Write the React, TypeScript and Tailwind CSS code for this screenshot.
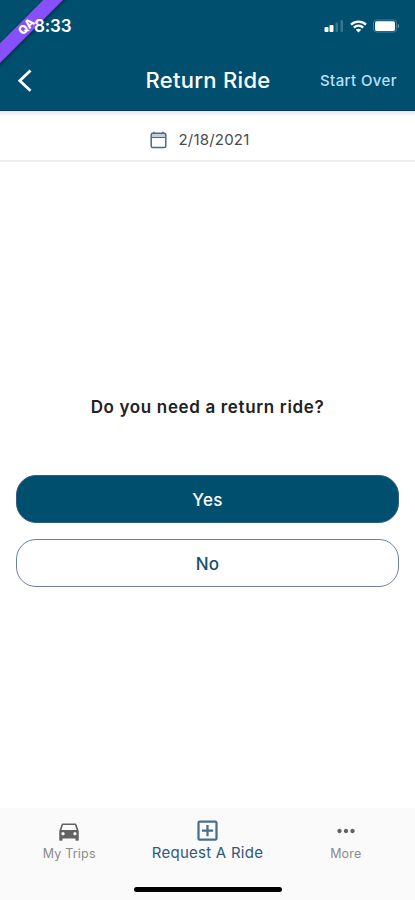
import { MdDirectionsCar, MdMoreHoriz, MdOutlineAddBox } from "react-icons/md";

function EnvironmentRibbon() {
  return (
    <div className="absolute -left-[24px] top-[19.5px] z-10 flex h-[13.5px] w-[100px] -rotate-45 items-center justify-center bg-[#8750fa] pl-px pt-px text-[12px] font-extrabold leading-none text-white shadow-[0_1px_4px_rgba(0,0,0,0.5)]">
      QA
    </div>
  );
}

function StatusBar() {
  return (
    <div className="flex h-[52px] items-center justify-between pl-[34px] pr-[15px]">
      <span className="relative top-px z-20 text-[17px] font-semibold tracking-[-0.15px]">8:33</span>
      <div className="flex items-center gap-[6px]">
        <svg width="20" height="14" viewBox="0 0 20 14" fill="currentColor">
          <rect x="0.5" y="8" width="4" height="5" rx="1" />
          <rect x="5.5" y="6" width="4" height="7" rx="1" />
          <rect x="11.5" y="3.5" width="2.5" height="9.5" rx="1" opacity="0.22" />
          <rect x="16.5" y="1" width="2.5" height="12" rx="1" opacity="0.22" />
        </svg>
        <svg width="17" height="13" viewBox="0 0 17 13" fill="none" stroke="currentColor" strokeWidth="2.3">
          <path d="M1 4.6c4.3-4 10.7-4 15 0" />
          <path d="M3.8 7.6c2.7-2.5 6.7-2.5 9.4 0" />
          <path d="M8.5 12.5 5.8 9.8c1.5-1.4 3.9-1.4 5.4 0z" fill="currentColor" stroke="none" />
        </svg>
        <svg width="27" height="14" viewBox="0 0 27 14">
          <rect x="0.5" y="1" width="23" height="12" rx="3" fill="none" stroke="currentColor" opacity="0.25" />
          <rect x="2" y="2.3" width="20" height="9.8" rx="1.8" fill="currentColor" />
          <path d="M24.8 4.8c1.6.7 1.6 3.7 0 4.4z" fill="currentColor" opacity="0.5" />
        </svg>
      </div>
    </div>
  );
}

function Header() {
  return (
    <header className="relative h-[111px] overflow-hidden border-b border-[#003a5c] bg-[#004f6f] text-white">
      <EnvironmentRibbon />
      <StatusBar />
      <div className="grid h-[57px] grid-cols-[1fr_auto_1fr] items-center pl-[18px] pr-[18px]">
        <button aria-label="Back">
          <svg width="16" height="24" viewBox="0 0 16 24" fill="none" stroke="currentColor" strokeWidth="2.8">
            <path d="M12.5 1.5 1.8 11.8l10.7 10" />
          </svg>
        </button>
        <h1 className="pl-px text-[22px] font-medium tracking-[0.3px]">Return Ride</h1>
        <button className="justify-self-end pt-px text-[15px] font-medium tracking-[0.4px] text-[#bce0fa]">
          Start Over
        </button>
      </div>
    </header>
  );
}

function DateBar() {
  return (
    <div className="flex h-[51px] items-center justify-center gap-3 border-b-2 border-[#eeeeee] bg-[linear-gradient(#e9e7f0,#ffffff_6px)] pr-4 pt-2 text-[#4b4b4b]">
      <svg width="17" height="18" viewBox="0 0 17 18" fill="none" stroke="#456b8d" strokeWidth="1.5">
        <path d="M1.5 2.5h14v4h-14z" fill="#c3cfdd" stroke="none" />
        <rect x="1.2" y="2.2" width="14.6" height="14.3" rx="1.5" />
        <path d="M1.5 6.5h14" strokeWidth="1" />
        <path d="M4 .8v2M13 .8v2" />
      </svg>
      <span className="pt-px text-[15px] tracking-[0.2px]">2/18/2021</span>
    </div>
  );
}

const tabs = [
  { label: "My Trips", icon: <MdDirectionsCar size={26} />, active: false },
  { label: "Request A Ride", icon: <MdOutlineAddBox size={27} />, active: true },
  { label: "More", icon: <MdMoreHoriz size={26} />, active: false },
];

function TabBar() {
  return (
    <nav className="flex h-[92px] flex-col items-center bg-[#fafafa]">
      <div className="grid w-full grid-cols-3 pt-[9px]">
        {tabs.map((tab) => (
          <button
            key={tab.label}
            className={
              tab.active
                ? "flex flex-col items-center text-[15px] leading-5 tracking-[0.25px] text-[#2e597b]"
                : "flex flex-col items-center text-[12.5px] leading-5 tracking-[0.2px] text-[#8b8b8b]"
            }
          >
            <span
              className={
                tab.active ? "flex h-[26px] items-center text-[#4a6f8c]" : "flex h-[27px] items-center text-[#626262]"
              }
            >
              {tab.icon}
            </span>
            {tab.label}
          </button>
        ))}
      </div>
      <div className="mb-[8px] mt-auto h-[5px] w-[148px] rounded-full bg-black" />
    </nav>
  );
}

export default function App() {
  return (
    <div className="flex h-[900px] w-full flex-col overflow-hidden bg-white font-['Inter',sans-serif]">
      <Header />
      <DateBar />
      <main className="flex flex-1 flex-col px-4 pt-[233px]">
        <h2 className="text-center text-[17px] font-semibold leading-6 tracking-[0.65px] text-[#222222]">
          Do you need a return ride?
        </h2>
        <div className="mt-14 flex flex-col gap-4">
          <button className="h-12 rounded-[20px] border border-[#315f82] bg-[#004f6f] pt-[3px] text-[17px] font-medium tracking-[0.3px] text-white">
            Yes
          </button>
          <button className="h-12 rounded-[20px] border border-[#6b829f] bg-white pt-[3px] text-[17px] font-medium tracking-[0.3px] text-[#155070]">
            No
          </button>
        </div>
      </main>
      <TabBar />
    </div>
  );
}
